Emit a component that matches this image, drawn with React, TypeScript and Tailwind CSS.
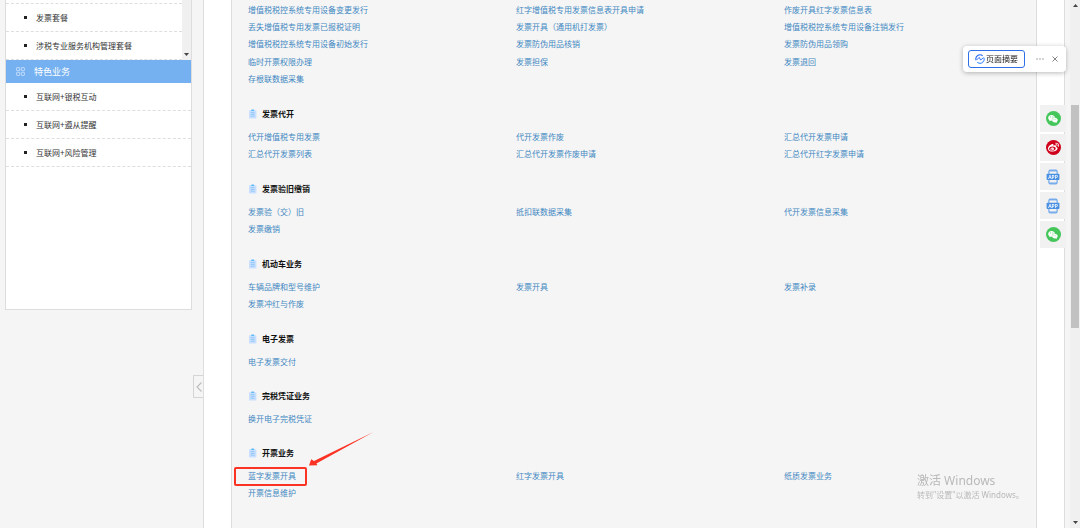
import React from "react";
import clsx from "clsx";
import { FaWeixin, FaWeibo } from "react-icons/fa";

interface Section {
  title?: string;
  links: string[][];
}

const packages = ["发票套餐", "涉税专业服务机构管理套餐"];
const features = ["互联网+银税互动", "互联网+遵从提醒", "互联网+风险管理"];

const sections: Section[] = [
  {
    links: [
      ["增值税税控系统专用设备变更发行", "红字增值税专用发票信息表开具申请", "作废开具红字发票信息表"],
      ["丢失增值税专用发票已报税证明", "发票开具（通用机打发票）", "增值税税控系统专用设备注销发行"],
      ["增值税税控系统专用设备初始发行", "发票防伪用品核销", "发票防伪用品领购"],
      ["临时开票权限办理", "发票担保", "发票退回"],
      ["存根联数据采集"],
    ],
  },
  {
    title: "发票代开",
    links: [
      ["代开增值税专用发票", "代开发票作废", "汇总代开发票申请"],
      ["汇总代开发票列表", "汇总代开发票作废申请", "汇总代开红字发票申请"],
    ],
  },
  {
    title: "发票验旧缴销",
    links: [["发票验（交）旧", "抵扣联数据采集", "代开发票信息采集"], ["发票缴销"]],
  },
  {
    title: "机动车业务",
    links: [["车辆品牌和型号维护", "发票开具", "发票补录"], ["发票冲红与作废"]],
  },
  { title: "电子发票", links: [["电子发票交付"]] },
  { title: "完税凭证业务", links: [["换开电子完税凭证"]] },
  {
    title: "开票业务",
    links: [["蓝字发票开具", "红字发票开具", "纸质发票业务"], ["开票信息维护"]],
  },
];

const listHeight: Record<number, string> = {
  1: "h-[17px]",
  2: "h-[35px]",
  5: "h-[87px]",
};

const ClipboardIcon = () => (
  <svg viewBox="0 0 10 10" className="w-[10px] h-[10px] shrink-0">
    <rect x="1" y="1.2" width="7.4" height="8.2" rx="0.5" fill="#c9dfff" />
    <rect x="3.2" y="0.4" width="3" height="1.6" rx="0.5" fill="#5cbcf7" />
    <path d="M2.8 3.6h3.8M2.8 5.4h3.8M2.8 7.2h3.8" stroke="#7cc0f8" strokeWidth="0.7" />
  </svg>
);

const GridIcon = () => (
  <svg viewBox="0 0 9 9" className="w-[9px] h-[9px]" fill="none" stroke="#d3e7ff" strokeWidth="0.8">
    <rect x="0.6" y="0.6" width="3.1" height="3.1" rx="0.5" />
    <rect x="5.3" y="0.6" width="3.1" height="3.1" rx="0.5" />
    <rect x="0.6" y="5.3" width="3.1" height="3.1" rx="0.5" />
    <rect x="5.3" y="5.3" width="3.1" height="3.1" rx="0.5" />
  </svg>
);

const AppIcon = () => (
  <svg viewBox="0 0 14 16" className="w-[14px] h-[16px]">
    <rect x="2.9" y="1.1" width="8.2" height="13.8" rx="1" fill="#f1f1f1" stroke="#5a9cea" strokeWidth="1" />
    <path d="M3 1.9h8M3 14h8" stroke="#5a9cea" strokeWidth="0.9" />
    <rect x="0.6" y="4.8" width="12.8" height="6.2" rx="0.8" fill="#4a90e2" />
    <text x="7" y="9.8" textAnchor="middle" fontSize="5" fontWeight="600" fill="#fff">
      APP
    </text>
  </svg>
);

const SummaryIcon = () => (
  <svg viewBox="0 0 10 10" className="w-[10px] h-[10px]" fill="none">
    <path d="M7.6 1.7A4.2 4.2 0 0 0 1 6.2" stroke="#2468f2" strokeWidth="1.1" />
    <path d="M2.2 8.2A4.2 4.2 0 0 0 9 3.8" stroke="#4c93ff" strokeWidth="1.1" />
    <path d="M1.4 6.2 4.2 3.4 5.6 6 8.6 3.6" stroke="#2468f2" strokeWidth="0.9" />
  </svg>
);

const SideItem = ({ label }: { label: string }) => (
  <li className="h-7 border-b border-dashed border-[#dedede] pl-[18px]">
    <a href="#" className="flex h-full items-center text-[#333]">
      <span className="w-[3px] h-[3px] bg-[#222] mr-[9px]" />
      {label}
    </a>
  </li>
);

const Sidebar = () => (
  <aside className="w-[187px] h-[310px] shrink-0 ml-[5px] bg-white border border-t-0 border-[#ddd]">
    <div className="flex">
      <ul className="flex-1">
        <li className="h-1 border-b border-dashed border-[#dedede]" />
        {packages.map((label) => (
          <SideItem key={label} label={label} />
        ))}
      </ul>
      <div className="w-[9px] bg-[#f0f0f0] flex flex-col justify-end items-center pb-1">
        <svg viewBox="0 0 5 3" className="w-[5px] h-[3px]">
          <path d="M0 0h5L2.5 3z" fill="#444" />
        </svg>
      </div>
    </div>
    <h2 className="h-[23px] bg-[#75b1f0] text-white text-[9px] flex items-center gap-[9px] pl-[10px]">
      <GridIcon />
      特色业务
    </h2>
    <ul>
      {features.map((label) => (
        <SideItem key={label} label={label} />
      ))}
    </ul>
  </aside>
);

// Red frame and arrow pointing at the entry to click
const Callout = () => (
  <>
    <span className="absolute left-[2px] top-0 w-[73px] h-[19px] border-2 border-[#fb3324] rounded-xs pointer-events-none" />
    <svg viewBox="0 0 66 38" className="absolute left-[76px] bottom-full w-[66px] h-[38px] pointer-events-none">
      <path d="M65.5 3 8.4 34.6 9.4 36.2 1 36.6 3.2 30.2 6 32z" fill="#fb3324" />
    </svg>
  </>
);

const SectionBlock = ({ title, links }: Section) => (
  <section>
    {title && (
      <h3 className="h-10 pt-[11px] pl-4 flex items-center gap-1 font-bold text-[#111]">
        <ClipboardIcon />
        {title}
      </h3>
    )}
    <ul className={clsx("grid grid-cols-3 auto-rows-fr", listHeight[links.length])}>
      {links.map((row) =>
        row.map((label, i) => (
          <li
            key={label}
            className={clsx("relative flex items-center pl-4", i === 0 && "col-start-1")}
          >
            <a href="#" className="text-[#3f87c2] whitespace-nowrap">
              {label}
            </a>
            {label === "蓝字发票开具" && <Callout />}
          </li>
        ))
      )}
    </ul>
  </section>
);

const SummaryPopup = () => (
  <div className="fixed top-[46px] right-[14px] h-[26px] w-[103px] bg-white rounded shadow-[0_1px_5px_rgba(0,0,0,0.28)] flex items-center pl-[5px]">
    <button className="w-[57px] h-[18px] border border-[#2f70e8] rounded-[3px] flex items-center justify-center gap-px text-[#222]">
      <SummaryIcon />
      页面摘要
    </button>
    <button aria-label="更多" className="ml-[11px]">
      <svg viewBox="0 0 8 8" className="w-2 h-2" fill="#888">
        <circle cx="1" cy="4" r="0.7" />
        <circle cx="4" cy="4" r="0.7" />
        <circle cx="7" cy="4" r="0.7" />
      </svg>
    </button>
    <button aria-label="关闭" className="ml-[7px]">
      <svg viewBox="0 0 8 8" className="w-2 h-2" stroke="#777" strokeWidth="0.9">
        <path d="M1.5 1.5l5 5M6.5 1.5l-5 5" />
      </svg>
    </button>
  </div>
);

const tools = [
  { label: "微信", kind: "wechat" },
  { label: "微博", kind: "weibo" },
  { label: "手机APP", kind: "app" },
  { label: "办税APP", kind: "app" },
  { label: "微信公众号", kind: "wechat" },
];

const ToolIcon = ({ kind }: { kind: string }) => {
  if (kind === "app") return <AppIcon />;
  return (
    <span
      className={clsx(
        "w-[15px] h-[15px] rounded-full flex items-center justify-center text-white",
        kind === "wechat" ? "bg-[#45c65a]" : "bg-[#d0021b]"
      )}
    >
      {kind === "wechat" ? <FaWeixin size={10} /> : <FaWeibo size={11} />}
    </span>
  );
};

const ToolBar = () => (
  <div className="fixed top-[105px] right-[14px] flex flex-col gap-0.5">
    {tools.map(({ label, kind }) => (
      <button
        key={label}
        aria-label={label}
        className="w-[26px] h-[27px] bg-[#f1f1f1] flex items-center justify-center"
      >
        <ToolIcon kind={kind} />
      </button>
    ))}
  </div>
);

const ScrollBar = () => (
  <div className="w-[10px] shrink-0 bg-[#f0f0f0] flex flex-col items-center py-1">
    <svg viewBox="0 0 5 3" className="w-[5px] h-[3px]">
      <path d="M0 3h5L2.5 0z" fill="#444" />
    </svg>
    <div className="mt-[98px] mb-auto w-2 h-[223px] bg-[#c1c1c1]" />
    <svg viewBox="0 0 5 3" className="w-[5px] h-[3px]">
      <path d="M0 0h5L2.5 3z" fill="#444" />
    </svg>
  </div>
);

const App: React.FC = () => (
  <div className="h-screen overflow-hidden bg-[#f5f5f5] flex text-[8px] leading-3 font-['Noto_Sans','Noto_Sans_CJK_SC',sans-serif]">
    <Sidebar />
    <div className="w-[11px] shrink-0 pl-px">
      <button
        aria-label="收起"
        className="mt-[375px] w-[10px] h-[23px] border border-r-0 border-[#d5d5d5] flex items-center justify-center"
      >
        <svg viewBox="0 0 8 12" className="w-2 h-3" fill="none" stroke="#bbb" strokeWidth="1.1">
          <path d="M6.5 1.5 2 6l4.5 4.5" />
        </svg>
      </button>
    </div>
    <div className="flex-1 bg-white border-x border-[#ddd] px-[27px] mr-[5px]">
      <main className="h-full bg-[#f5f5f5] border-x border-[#ddd] pt-px">
        {sections.map((section, i) => (
          <SectionBlock key={i} {...section} />
        ))}
      </main>
    </div>
    <ScrollBar />
    <SummaryPopup />
    <ToolBar />
    <div className="fixed right-[50px] bottom-[27px] w-[113px] text-[#b9b9b9] whitespace-nowrap pointer-events-none">
      <p className="text-[12px] leading-4">激活 Windows</p>
      <p>转到"设置"以激活 Windows。</p>
    </div>
  </div>
);

export default App;
